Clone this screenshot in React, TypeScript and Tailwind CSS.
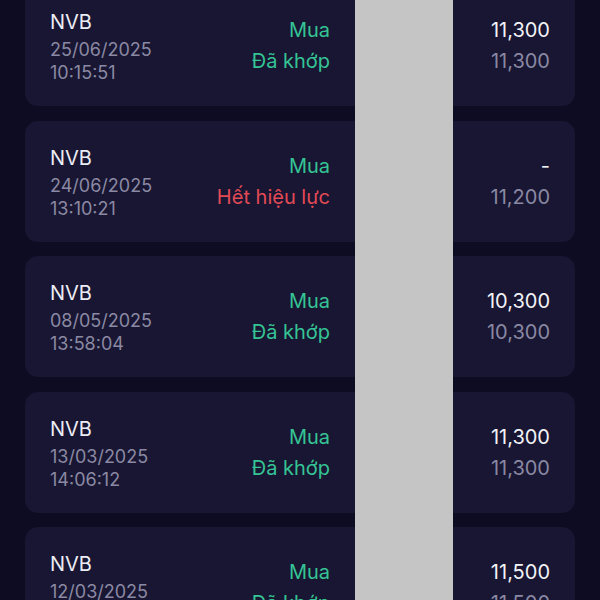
import React from "react"

type Order = {
  symbol: string
  date: string
  time: string
  side: string
  status: string
  statusColor: string
  price: string
  matched: string
}

const orders: Order[] = [
  { symbol: "NVB", date: "25/06/2025", time: "10:15:51", side: "Mua", status: "Đã khớp", statusColor: "text-[#35c495]", price: "11,300", matched: "11,300" },
  { symbol: "NVB", date: "24/06/2025", time: "13:10:21", side: "Mua", status: "Hết hiệu lực", statusColor: "text-[#e24a55]", price: "-", matched: "11,200" },
  { symbol: "NVB", date: "08/05/2025", time: "13:58:04", side: "Mua", status: "Đã khớp", statusColor: "text-[#35c495]", price: "10,300", matched: "10,300" },
  { symbol: "NVB", date: "13/03/2025", time: "14:06:12", side: "Mua", status: "Đã khớp", statusColor: "text-[#35c495]", price: "11,300", matched: "11,300" },
  { symbol: "NVB", date: "12/03/2025", time: "10:02:45", side: "Mua", status: "Đã khớp", statusColor: "text-[#35c495]", price: "11,500", matched: "11,500" },
]

function OrderCard({ o }: { o: Order }) {
  return (
    <div className="flex h-[121px] shrink-0 rounded-[13px] bg-[#181632] px-[25px]">
      <div className="w-[150px] pt-[25px]">
        <div className="text-[20px] leading-[24px] text-[#ececf4]">{o.symbol}</div>
        <div className="mt-[4px] text-[18px] leading-[24px] text-[#8b89a3]">{o.date}</div>
        <div className="text-[18px] leading-[22px] text-[#8b89a3]">{o.time}</div>
      </div>
      <div className="w-[130px] pt-[30px] text-right text-[20px] leading-[31px]">
        <div className="text-[#35c495]">{o.side}</div>
        <div className={`whitespace-nowrap ${o.statusColor}`}>{o.status}</div>
      </div>
      <div className="flex-1 pt-[30px] text-right text-[20px] leading-[31px]">
        <div className="text-[#f2f2f7]">{o.price}</div>
        <div className="text-[#8a88a3]">{o.matched}</div>
      </div>
    </div>
  )
}

export default function App() {
  return (
    <div
      className="relative h-[600px] w-[600px] overflow-hidden bg-[#0e0c22]"
      style={{ fontFamily: "Inter, 'Noto Sans', sans-serif" }}
    >
      <div className="-mt-[15px] flex flex-col gap-[14.5px] px-[25px]">
        {orders.map((o, i) => (
          <OrderCard key={i} o={o} />
        ))}
      </div>
      <div className="absolute inset-y-0 left-[355px] w-[98px] bg-[#c5c5c5]" />
    </div>
  )
}
